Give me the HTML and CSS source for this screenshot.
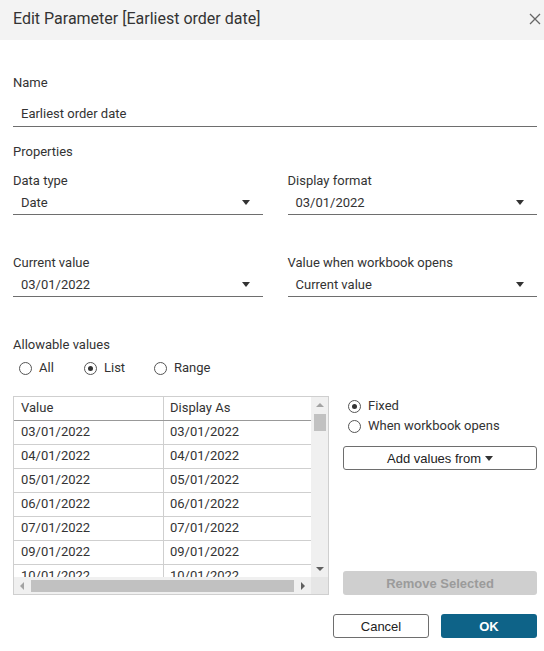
FILE: index.html
```html
<!DOCTYPE html>
<html>
<head>
<meta charset="utf-8">
<link rel="stylesheet" href="styles.css">
</head>
<body>
<div class="dialog">
  <div class="titlebar">
    <span class="title">Edit Parameter [Earliest order date]</span>
    <svg class="close" width="12" height="12" viewBox="0 0 12 12"><path d="M1 1L11 11M11 1L1 11" stroke="#666" stroke-width="1.3" fill="none"/></svg>
  </div>
  <div class="body">
    <div class="label name-label">Name</div>
    <div class="textinput">Earliest order date</div>
    <div class="label props-label">Properties</div>

    <div class="pair first-pair">
      <div class="field">
        <div class="label">Data type</div>
        <div class="select"><span>Date</span><span class="caret"></span></div>
      </div>
      <div class="field">
        <div class="label">Display format</div>
        <div class="select"><span>03/01/2022</span><span class="caret"></span></div>
      </div>
    </div>

    <div class="pair second-pair">
      <div class="field">
        <div class="label">Current value</div>
        <div class="select"><span>03/01/2022</span><span class="caret"></span></div>
      </div>
      <div class="field">
        <div class="label">Value when workbook opens</div>
        <div class="select"><span>Current value</span><span class="caret"></span></div>
      </div>
    </div>

    <div class="label allow-label">Allowable values</div>
    <div class="radios">
      <label class="radio r-all"><span class="dot"></span>All</label>
      <label class="radio r-list"><span class="dot on"></span>List</label>
      <label class="radio r-range"><span class="dot"></span>Range</label>
    </div>

    <div class="listarea">
      <div class="table">
        <div class="tmain">
          <div class="cells">
            <div class="row head"><div class="c1">Value</div><div class="c2">Display As</div></div>
            <div class="row"><div class="c1">03/01/2022</div><div class="c2">03/01/2022</div></div>
            <div class="row"><div class="c1">04/01/2022</div><div class="c2">04/01/2022</div></div>
            <div class="row"><div class="c1">05/01/2022</div><div class="c2">05/01/2022</div></div>
            <div class="row"><div class="c1">06/01/2022</div><div class="c2">06/01/2022</div></div>
            <div class="row"><div class="c1">07/01/2022</div><div class="c2">07/01/2022</div></div>
            <div class="row"><div class="c1">09/01/2022</div><div class="c2">09/01/2022</div></div>
            <div class="row"><div class="c1">10/01/2022</div><div class="c2">10/01/2022</div></div>
          </div>
          <div class="vscroll">
            <span class="arr up"></span>
            <span class="vthumb"></span>
            <span class="vspace"></span>
            <span class="arr down"></span>
          </div>
        </div>
        <div class="tbottom">
          <div class="hscroll">
            <span class="arr left"></span>
            <span class="hthumb"></span>
            <span class="arr right"></span>
          </div>
          <div class="corner"></div>
        </div>
      </div>

      <div class="side">
        <label class="radio side-radio"><span class="dot on"></span>Fixed</label>
        <label class="radio side-radio"><span class="dot"></span>When workbook opens</label>
        <div class="btn addbtn">Add values from <span class="btncaret"></span></div>
        <div class="sidespace"></div>
        <div class="btn removebtn">Remove Selected</div>
      </div>
    </div>

    <div class="footer">
      <div class="btn cancel">Cancel</div>
      <div class="btn ok">OK</div>
    </div>
  </div>
</div>
</body>
</html>
```

FILE: styles.css
```css
html, body {
  margin: 0;
  padding: 0;
  background: #fff;
}
body {
  font-family: Roboto, "Liberation Sans", sans-serif;
  font-size: 13px;
  color: #333;
  width: 544px;
  height: 651px;
  overflow: hidden;
}
.dialog {
  display: flex;
  flex-direction: column;
}
.titlebar {
  height: 40px;
  background: #f3f3f3;
  display: flex;
  align-items: center;
  justify-content: space-between;
  padding: 0 2px 4px 13px;
  box-sizing: border-box;
}
.title {
  font-size: 16px;
  color: #333;
}
.close {
  margin-right: 1px;
  margin-top: 2px;
}
.body {
  padding: 0 7px 0 13px;
  display: flex;
  flex-direction: column;
}
.label {
  line-height: 16px;
  height: 16px;
}
.name-label { margin-top: 35px; }
.textinput {
  margin-top: 14px;
  height: 21px;
  line-height: 18px;
  padding-left: 8px;
  border-bottom: 1px solid #6e6e6e;
}
.props-label { margin-top: 17px; }
.pair {
  display: flex;
  gap: 25px;
}
.first-pair { margin-top: 13px; }
.second-pair { margin-top: 40px; }
.field {
  flex: 1;
  display: flex;
  flex-direction: column;
}
.select {
  margin-top: 2px;
  height: 23px;
  display: flex;
  align-items: center;
  justify-content: space-between;
  padding: 0 13px 0 8px;
  border-bottom: 1px solid #6e6e6e;
}
.caret {
  width: 0;
  height: 0;
  border-left: 4px solid transparent;
  border-right: 4px solid transparent;
  border-top: 5px solid #333;
}
.allow-label { margin-top: 40px; }
.radios {
  margin-top: 7px;
  height: 16px;
  display: flex;
  padding-left: 6px;
}
.radio {
  display: flex;
  align-items: center;
  line-height: 16px;
  height: 16px;
}
.r-all { width: 65px; }
.r-list { width: 70px; }
.dot {
  width: 11px;
  height: 11px;
  border: 1px solid #555;
  border-radius: 50%;
  margin-right: 7px;
  position: relative;
  flex: none;
}
.dot.on::after {
  content: "";
  position: absolute;
  left: 3px;
  top: 3px;
  width: 5px;
  height: 5px;
  border-radius: 50%;
  background: #333;
}
.listarea {
  margin-top: 20px;
  display: flex;
  gap: 14px;
}
.table {
  width: 316px;
  height: 199px;
  border: 1px solid #cfcfcf;
  box-sizing: border-box;
  display: flex;
  flex-direction: column;
}
.tmain {
  flex: 1;
  display: flex;
  min-height: 0;
}
.cells {
  flex: 1;
  overflow: hidden;
}
.row {
  display: flex;
  height: 24px;
  box-sizing: border-box;
  border-bottom: 1px solid #cfcfcf;
  line-height: 22px;
}
.row.head {
  border-bottom: 1px solid #999;
}
.c1 {
  width: 150px;
  box-sizing: border-box;
  padding-left: 7px;
  border-right: 1px solid #cfcfcf;
}
.c2 {
  flex: 1;
  padding-left: 6px;
}
.vscroll {
  width: 17px;
  background: #f0f0f0;
  display: flex;
  flex-direction: column;
  align-items: center;
}
.arr {
  width: 0;
  height: 0;
  flex: none;
}
.arr.up {
  margin-top: 6px;
  border-left: 4px solid transparent;
  border-right: 4px solid transparent;
  border-bottom: 4px solid #a3a3a3;
}
.vthumb {
  margin-top: 7px;
  width: 12px;
  height: 17px;
  background: #c1c1c1;
}
.vspace { flex: 1; }
.arr.down {
  margin-bottom: 6px;
  border-left: 4px solid transparent;
  border-right: 4px solid transparent;
  border-top: 4px solid #606060;
}
.tbottom {
  height: 17px;
  display: flex;
}
.hscroll {
  flex: 1;
  background: #f0f0f0;
  display: flex;
  align-items: center;
  padding: 0 6px;
}
.arr.left {
  border-top: 4px solid transparent;
  border-bottom: 4px solid transparent;
  border-right: 4px solid #a3a3a3;
}
.hthumb {
  height: 12px;
  margin: 0 7px 0 7px;
  flex: 1;
  background: #c1c1c1;
}
.arr.right {
  border-top: 4px solid transparent;
  border-bottom: 4px solid transparent;
  border-left: 4px solid #606060;
}
.corner {
  width: 17px;
  background: #e6e6e6;
}
.side {
  flex: 1;
  display: flex;
  flex-direction: column;
  height: 199px;
}
.side-radio {
  padding-left: 5px;
  margin-bottom: 4px;
}
.side-radio:first-child { margin-top: 2px; }
.btn {
  font-family: "Liberation Sans", Arial, sans-serif;
  font-size: 13px;
  display: flex;
  align-items: center;
  justify-content: center;
  box-sizing: border-box;
  height: 24px;
  border-radius: 3px;
}
.addbtn {
  margin-top: 8px;
  border: 1px solid #6e6e6e;
  color: #222;
  gap: 4px;
}
.btncaret {
  width: 0;
  height: 0;
  border-left: 4px solid transparent;
  border-right: 4px solid transparent;
  border-top: 5px solid #333;
  margin-top: 1px;
}
.sidespace { flex: 1; }
.removebtn {
  background: #cfcfcf;
  color: #9b9b9b;
  font-weight: bold;
}
.footer {
  margin-top: 19px;
  display: flex;
  justify-content: flex-end;
  gap: 12px;
}
.cancel {
  width: 96px;
  border: 1px solid #6e6e6e;
  color: #222;
}
.ok {
  width: 96px;
  background: #0e6388;
  color: #fff;
  font-weight: bold;
}
```
